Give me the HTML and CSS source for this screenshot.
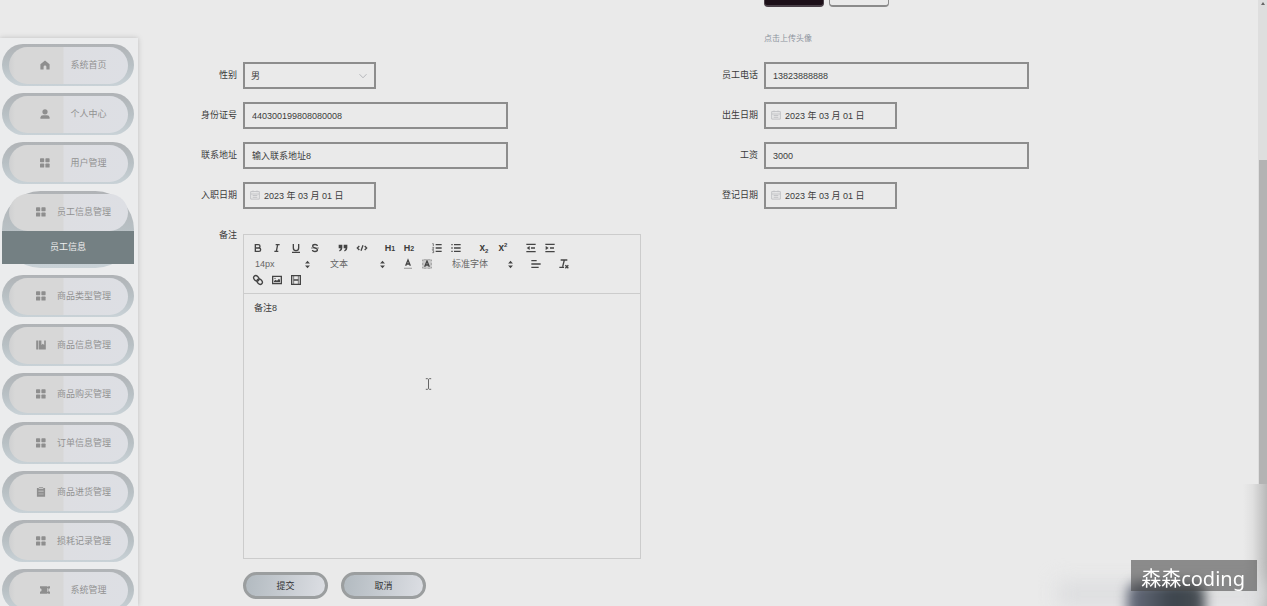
FILE: index.html
```html
<!DOCTYPE html>
<html lang="zh-CN">
<head>
<meta charset="utf-8">
<title>员工信息</title>
<link rel="stylesheet" href="styles.css">
</head>
<body>
<svg class="sprite" aria-hidden="true">
  <symbol id="grid" viewBox="0 0 10 10"><rect x="0" y="0.3" width="4.2" height="4" rx=".7"/><rect x="5.4" y="0.3" width="4.2" height="4" rx=".7"/><rect x="0" y="5.6" width="4.2" height="4" rx=".7"/><rect x="5.4" y="5.6" width="4.2" height="4" rx=".7"/></symbol>
  <symbol id="home" viewBox="0 0 10 10"><path d="M5 .4 9.6 4.3V9.6H6.4V6.8a1.4 1.4 0 0 0-2.8 0V9.6H.4V4.3z"/></symbol>
  <symbol id="user" viewBox="0 0 10 10"><circle cx="5" cy="2.8" r="2.6"/><path d="M.4 9.7V8.6Q.6 6.3 3 6.3H7Q9.4 6.3 9.6 8.6V9.7z"/></symbol>
  <symbol id="book" viewBox="0 0 10 10"><path d="M.2.4H2.4V9.6H.2zM3 .4H5.4V5L6.8 3.8 8.2 5V.4H9.8V9.6H3z"/></symbol>
  <symbol id="clip" viewBox="0 0 10 10"><path fill-rule="evenodd" d="M.9 1.1H2.9V.2H7.1V1.1H9.1V9.8H.9zM2.7 1.2V2H7.3V1.2zM2.4 3.8V4.4H7.6V3.8zM2.4 6.7V7.3H7.6V6.7z"/></symbol>
  <symbol id="ticket" viewBox="0 0 11 10"><path d="M0 1H8L8.6 1.7 9.2 1H11V3.2a1.8 1.8 0 0 0 0 3.6V9H9.2L8.6 8.3 8 9H0V6.8a1.8 1.8 0 0 0 0-3.6z"/><path class="cut" d="M8.5 3V7"/></symbol>
  <symbol id="cal" viewBox="0 0 10 10"><path d="M.7 1.6H9.3V9.1H.7zM.7 4H9.3M3 .5V2.2M7 .5V2.2M2.6 5.6H7.4M2.6 7.3H7.4"/></symbol>
  <symbol id="updown" viewBox="0 0 18 18"><path d="M5 10.5 9 15 13 10.5zM5 7.5 9 3 13 7.5z"/></symbol>
</svg>

<div class="page">
  <nav class="sidebar">
    <ul class="menu">
      <li class="item short"><a href="#"><svg><use href="#home"/></svg><span>系统首页</span></a></li>
      <li class="item short"><a href="#"><svg><use href="#user"/></svg><span>个人中心</span></a></li>
      <li class="item short"><a href="#"><svg><use href="#grid"/></svg><span>用户管理</span></a></li>
      <li class="item"><a href="#"><svg><use href="#grid"/></svg><span>员工信息管理</span></a>
        <a class="sub" href="#">员工信息</a></li>
      <li class="item"><a href="#"><svg><use href="#grid"/></svg><span>商品类型管理</span></a></li>
      <li class="item"><a href="#"><svg><use href="#book"/></svg><span>商品信息管理</span></a></li>
      <li class="item"><a href="#"><svg><use href="#grid"/></svg><span>商品购买管理</span></a></li>
      <li class="item"><a href="#"><svg><use href="#grid"/></svg><span>订单信息管理</span></a></li>
      <li class="item"><a href="#"><svg><use href="#clip"/></svg><span>商品进货管理</span></a></li>
      <li class="item"><a href="#"><svg><use href="#grid"/></svg><span>损耗记录管理</span></a></li>
      <li class="item short"><a href="#"><svg><use href="#ticket"/></svg><span>系统管理</span></a></li>
    </ul>
  </nav>

  <main class="content">
    <form class="form">
      <div class="upload">
        <div class="thumbs"><span class="thumb photo"></span><span class="thumb"></span></div>
        <p class="hint">点击上传头像</p>
      </div>

      <div class="field"><label for="sex">性别</label>
        <div class="control small select"><select id="sex"><option>男</option><option>女</option></select><svg class="chevron" viewBox="0 0 10 10"><path d="M1.5 3.2 5 6.8 8.5 3.2"/></svg></div></div>
      <div class="field"><label for="phone">员工电话</label>
        <div class="control"><input id="phone" type="text" value="13823888888"></div></div>
      <div class="field"><label for="idno">身份证号</label>
        <div class="control"><input id="idno" type="text" value="440300199808080008"></div></div>
      <div class="field"><label for="birth">出生日期</label>
        <div class="control small date"><svg><use href="#cal"/></svg><input id="birth" type="text" value="2023 年 03 月 01 日"></div></div>
      <div class="field"><label for="addr">联系地址</label>
        <div class="control"><input id="addr" type="text" value="输入联系地址8"></div></div>
      <div class="field"><label for="pay">工资</label>
        <div class="control"><input id="pay" type="text" value="3000"></div></div>
      <div class="field"><label for="hired">入职日期</label>
        <div class="control small date"><svg><use href="#cal"/></svg><input id="hired" type="text" value="2023 年 03 月 01 日"></div></div>
      <div class="field"><label for="reg">登记日期</label>
        <div class="control small date"><svg><use href="#cal"/></svg><input id="reg" type="text" value="2023 年 03 月 01 日"></div></div>

      <div class="field note"><label for="note">备注</label>
        <div class="editor">
          <div class="toolbar">
            <div class="row">
              <div class="group">
                <button type="button" aria-label="加粗"><svg viewBox="0 0 18 18"><path class="bold" d="M5 4H9.5A2.5 2.5 0 0 1 9.5 9H5zM5 9H10.5A2.5 2.5 0 0 1 10.5 14H5z"/></svg></button>
                <button type="button" aria-label="斜体"><svg viewBox="0 0 18 18"><path d="M7 4H13M5 14H11M8 14 10 4"/></svg></button>
                <button type="button" aria-label="下划线"><svg viewBox="0 0 18 18"><path d="M5 3V9A4 4 0 0 0 13 9V3M3 15.5H15"/></svg></button>
                <button type="button" aria-label="删除线"><svg viewBox="0 0 18 18"><path d="M12.5 6C12.5 3 5.5 3 5.5 6.2 5.5 9 12.7 8.5 12.7 11.8 12.7 15 5.2 15 5.2 12"/><path class="fine" d="M3 9H15"/></svg></button>
              </div>
              <div class="group">
                <button type="button" aria-label="引用"><svg viewBox="0 0 18 18"><path class="solid" d="M2.5 4H8V9Q8 13 4 14.4L3.2 12.5Q5.3 11.5 5.4 9.5H2.5zM10 4H15.5V9Q15.5 13 11.5 14.4L10.7 12.5Q12.8 11.5 12.9 9.5H10z"/></svg></button>
                <button type="button" aria-label="代码"><svg viewBox="0 0 18 18"><path d="M5 6 2 9 5 12M13 6 16 9 13 12M10.5 5 7.5 13"/></svg></button>
              </div>
              <div class="group">
                <button type="button" class="head">H<small>1</small></button>
                <button type="button" class="head">H<small>2</small></button>
              </div>
              <div class="group">
                <button type="button" aria-label="有序列表"><svg viewBox="0 0 18 18"><path d="M7 4H16M7 9H16M7 14H16"/><path class="fine" d="M2 2.5H3.5V6M2 8H4V9L2 11H4.5M2 13H4V16H2"/></svg></button>
                <button type="button" aria-label="无序列表"><svg viewBox="0 0 18 18"><path d="M6 4H16M6 9H16M6 14H16M2 4H4M2 9H4M2 14H4"/></svg></button>
              </div>
              <div class="group">
                <button type="button" class="script">x<sub>2</sub></button>
                <button type="button" class="script">x<sup>2</sup></button>
              </div>
              <div class="group">
                <button type="button" aria-label="减少缩进"><svg viewBox="0 0 18 18"><path d="M2 3.5H16M9 9H15M2 14.5H16"/><path class="solid" d="M7 6V12L2.5 9z"/></svg></button>
                <button type="button" aria-label="增加缩进"><svg viewBox="0 0 18 18"><path d="M2 3.5H16M9 9H15M2 14.5H16"/><path class="solid" d="M2.5 6V12L7 9z"/></svg></button>
              </div>
            </div>
            <div class="row">
              <div class="picker"><select aria-label="字号"><option>14px</option></select><svg><use href="#updown"/></svg></div>
              <div class="picker"><select aria-label="标题"><option>文本</option></select><svg><use href="#updown"/></svg></div>
              <div class="group">
                <button type="button" aria-label="文字颜色"><svg viewBox="0 0 18 18"><path d="M5.5 11.5 9 3 12.5 11.5M6.5 9H11.5"/><path class="pale" d="M3 15.5H15"/></svg></button>
                <button type="button" aria-label="背景颜色"><svg viewBox="0 0 18 18"><path class="dots" d="M2.5 2.5H15.5V15.5H2.5z"/><path d="M5.5 13 9 4.5 12.5 13M6.5 10.5H11.5"/></svg></button>
              </div>
              <div class="picker wide"><select aria-label="字体"><option>标准字体</option></select><svg><use href="#updown"/></svg></div>
              <div class="group"><button type="button" aria-label="对齐"><svg viewBox="0 0 18 18"><path d="M2 4H10M2 9H16M2 14H13"/></svg></button></div>
              <div class="group"><button type="button" aria-label="清除格式"><svg viewBox="0 0 18 18"><path d="M4 3H14M9.5 3 7 13M2 14H9M11 11 15.5 15.5M15.5 11 11 15.5"/></svg></button></div>
            </div>
            <div class="row">
              <div class="group">
                <button type="button" aria-label="链接"><svg viewBox="0 0 18 18"><ellipse cx="6.5" cy="6.5" rx="4.5" ry="3.4" transform="rotate(45 6.5 6.5)"/><ellipse cx="11.5" cy="11.5" rx="4.5" ry="3.4" transform="rotate(45 11.5 11.5)"/></svg></button>
                <button type="button" aria-label="图片"><svg viewBox="0 0 18 18"><path d="M2.5 3.5H15.5V14.5H2.5z"/><path class="solid" d="M4.5 12.5V10.5L7 8.5 9 10 12 7 13.5 9V12.5z"/><circle class="solid" cx="6" cy="6.5" r="1"/></svg></button>
                <button type="button" aria-label="视频"><svg viewBox="0 0 18 18"><path d="M2.5 2.5H15.5V15.5H2.5zM5.5 9H12.5"/><path class="fine" d="M5.5 3V15M12.5 3V15"/></svg></button>
              </div>
            </div>
          </div>
          <textarea id="note">备注8</textarea>
          <svg class="ibeam" viewBox="0 0 7 12"><path d="M.8 .7H2.6L3.5 1.4 4.4 .7H6.2M3.5 1.4V10.6M.8 11.3H2.6L3.5 10.6 4.4 11.3H6.2"/></svg>
        </div>
      </div>
      <div class="actions"><button type="submit">提交</button><button type="button">取消</button></div>
    </form>
  </main>

  <div class="scrollbar" aria-hidden="true"><span class="up"></span><span class="thumbbar"></span></div>
</div>
<div class="edge"></div>
<div class="haze"></div>
<div class="blob"></div>
<div class="mark">森森coding</div>
</body>
</html>
```
FILE: styles.css
```css
* { box-sizing: border-box; }
body {
  margin: 0;
  background: #eaeaea;
  color: #3c3c3c;
  font: 9px/12px "Liberation Sans", "Noto Sans CJK SC", sans-serif;
}
button, input, select, textarea { font: inherit; color: inherit; margin: 0; padding: 0; border: 0; background: none; border-radius: 0; outline: 0; }
select { appearance: none; }
a { color: inherit; text-decoration: none; }
.sprite { display: none; }
.page { display: flex; height: 100vh; overflow: hidden; }

.sidebar { flex: none; width: 138px; margin-top: 38px; padding: 6px 4px 0 2px; background: #ebeced; box-shadow: 0 0 5px #bdbdbd; }
.menu { display: grid; gap: 7px; margin: 0; padding: 0; list-style: none; }
.item { padding: 3px 0 2px; border-radius: 40px; background: linear-gradient(#b0b3b6, #b8c0c4 50%, #c9d2d7); color: #929292; }
.item > a:first-child {
  display: flex; align-items: center; justify-content: center; gap: 10px;
  height: 37px; margin: 0 6px 0 7px; padding: 0 0 2px 9px; border-radius: 19px;
  background: linear-gradient(90deg, #cfd0d1, #d7d7d7 6px, #d7d7d7 54px, #dddee2 55px, #dddfe4);
}
.item svg { width: 10px; height: 10px; margin: 0 1px; fill: #8e8e8e; }
.item.short > a:first-child { gap: 19px; }
.cut { stroke: #d7d7d7; }
.item .sub { display: block; margin-bottom: 2px; background: #748083; color: #eee; text-align: center; line-height: 33px; }

.content { flex: 1; min-width: 0; padding: 0 26px 0 52px; }
.form { display: grid; grid-template-columns: 1fr 1fr; row-gap: 13px; }
.upload { grid-column: 2; padding-left: 53px; height: 49px; }
.thumbs { display: flex; gap: 5px; }
.thumb { width: 60px; height: 7px; border: 1px solid #8b8b8b; border-width: 0 1px 2px; border-radius: 0 0 4px 4px; }
.photo { background: #1d1019; border-color: #4a4048; }
.hint { margin: 26px 0 0; color: #8c939d; font-size: 8px; }
.field { display: flex; gap: 6px; }
.field > label { flex: none; width: 47px; line-height: 27px; text-align: right; white-space: nowrap; }
.control { display: flex; align-items: center; width: 265px; height: 27px; padding: 0 7px; border: 2px solid #8d8d8d; }
.control.small { width: 133px; }
.control input, .control select { flex: 1; min-width: 0; height: 100%; }
.control.select { padding: 0 6px; }
.chevron { width: 10px; height: 10px; fill: none; stroke: #b5b7bb; }
.date { gap: 4px; }
.control.date { padding: 0 5px; }
.date svg { width: 10px; height: 10px; margin-bottom: 2px; fill: none; stroke: #c1c2c5; }

.note { grid-column: 1 / -1; margin-top: 12px; }
.note > label { line-height: 3px; }
.editor { position: relative; display: flex; flex-direction: column; width: 398px; height: 325px; border: 1px solid #ccc; }
.toolbar { padding: 5px; border-bottom: 1px solid #ccc; }
.row { display: flex; gap: 10px; height: 16px; }
.group { display: flex; gap: 1px; }
.group button { display: flex; align-items: center; justify-content: center; width: 18px; height: 16px; }
.group svg { width: 12px; height: 12px; fill: none; stroke: #444; stroke-width: 2; }
.group .fine { stroke-width: 1; }
.group .solid { fill: #444; stroke: none; }
.group .pale { stroke: #aaa; }
.group .dots { stroke-dasharray: 1 1; fill: #ccc; stroke: #999; }
.head, .script { font-weight: bold; }
.head small { font-size: 7px; padding-top: 2px; }
.script { font-size: 10px; }
.script sub, .script sup { font-size: 6px; line-height: 6px; }
.script sub { padding-top: 6px; }
.script sup { padding-bottom: 6px; }
.picker { display: flex; align-items: center; width: 65px; padding-left: 6px; color: #666; }
.picker.wide { width: 71px; }
.picker select { flex: 1; min-width: 0; }
.picker svg { width: 13px; height: 11px; fill: #444; }
textarea { flex: 1; padding: 8px 10px; resize: none; }
.ibeam { position: absolute; left: 181px; top: 143px; width: 7px; height: 12px; fill: none; stroke: #666; }
.actions { display: flex; gap: 13px; padding-left: 53px; }
.actions button { width: 85px; height: 27px; border: 3px solid #9b9e9f; border-radius: 14px; background: linear-gradient(100deg, #b2bac0, #dcdee3); color: #333; }

.scrollbar { flex: none; display: flex; flex-direction: column; width: 9px; background: #dedede; }
.up { width: 0; margin: 2px auto 0; border: 2px solid transparent; border-top: 0; border-bottom: 3px solid #666; }
.thumbbar { height: 325px; margin: 155px 0 0 1px; background: #b3b3b3; }
.edge { position: fixed; right: 0; top: 484px; bottom: 0; width: 24px; background: linear-gradient(90deg, #eaeaea, #e0e0e0 40%, #b9b9b9); }
.haze { position: fixed; right: 0; bottom: 0; width: 210px; height: 24px; background: #dcdddf; filter: blur(10px); }
.blob { position: fixed; right: 62px; bottom: -20px; width: 78px; height: 44px; border-radius: 12px; background: linear-gradient(90deg, #6a7080, #3c444c 60%, #4a5056); filter: blur(6px); }
.mark { position: fixed; right: 10px; bottom: 15px; padding: 6px 12px 0 10px; background: rgba(70, 70, 70, .58); color: #fff; font: 20px/25px "Noto Sans", "Noto Sans CJK SC", sans-serif; }
```
